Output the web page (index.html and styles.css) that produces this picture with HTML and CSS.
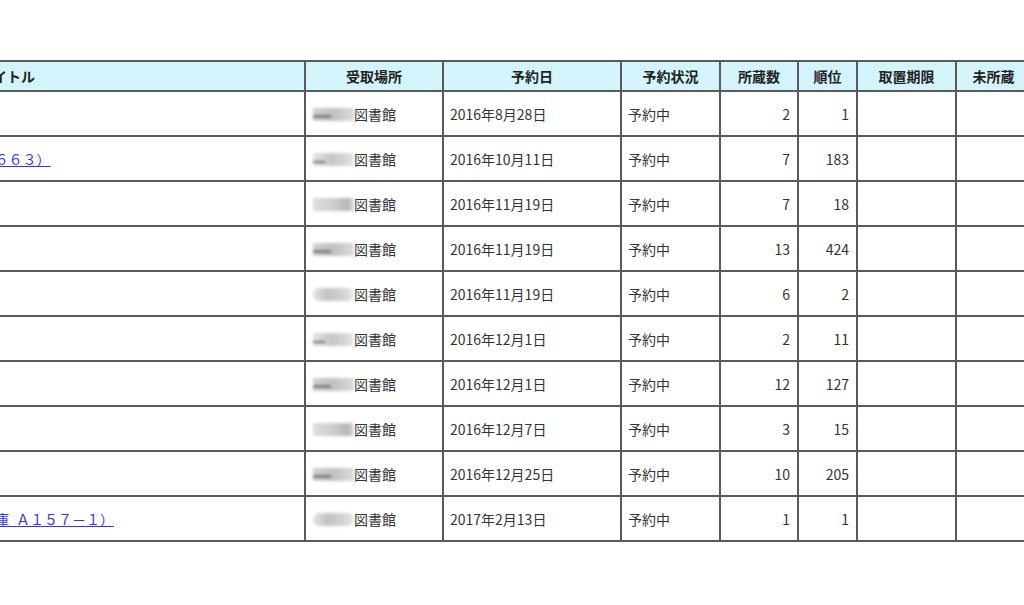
FILE: index.html
```html
<!DOCTYPE html>
<html lang="ja">
<head>
<meta charset="utf-8">
<title>予約一覧</title>
<link rel="stylesheet" href="styles.css">
</head>
<body>
<div class="page">
  <table class="resv">
    <colgroup>
      <col class="c-title">
      <col class="c-place">
      <col class="c-date">
      <col class="c-status">
      <col class="c-count">
      <col class="c-rank">
      <col class="c-keep">
      <col class="c-none">
    </colgroup>
    <thead>
      <tr>
        <th class="th-title">タイトル</th>
        <th>受取場所</th>
        <th>予約日</th>
        <th>予約状況</th>
        <th>所蔵数</th>
        <th>順位</th>
        <th>取置期限</th>
        <th>未所蔵</th>
      </tr>
    </thead>
    <tbody>
      <tr>
        <td class="title"></td>
        <td class="place"><span class="blur b1"></span>図書館</td>
        <td>2016年8月28日</td>
        <td>予約中</td>
        <td class="num">2</td>
        <td class="num">1</td>
        <td></td>
        <td></td>
      </tr>
      <tr>
        <td class="title"><a href="#">新しい図書館のつくりかたとその未来の展望（６６３）</a></td>
        <td class="place"><span class="blur b2"></span>図書館</td>
        <td>2016年10月11日</td>
        <td>予約中</td>
        <td class="num">7</td>
        <td class="num">183</td>
        <td></td>
        <td></td>
      </tr>
      <tr>
        <td class="title"></td>
        <td class="place"><span class="blur b3"></span>図書館</td>
        <td>2016年11月19日</td>
        <td>予約中</td>
        <td class="num">7</td>
        <td class="num">18</td>
        <td></td>
        <td></td>
      </tr>
      <tr>
        <td class="title"></td>
        <td class="place"><span class="blur b1"></span>図書館</td>
        <td>2016年11月19日</td>
        <td>予約中</td>
        <td class="num">13</td>
        <td class="num">424</td>
        <td></td>
        <td></td>
      </tr>
      <tr>
        <td class="title"></td>
        <td class="place"><span class="blur b4"></span>図書館</td>
        <td>2016年11月19日</td>
        <td>予約中</td>
        <td class="num">6</td>
        <td class="num">2</td>
        <td></td>
        <td></td>
      </tr>
      <tr>
        <td class="title"></td>
        <td class="place"><span class="blur b2"></span>図書館</td>
        <td>2016年12月1日</td>
        <td>予約中</td>
        <td class="num">2</td>
        <td class="num">11</td>
        <td></td>
        <td></td>
      </tr>
      <tr>
        <td class="title"></td>
        <td class="place"><span class="blur b1"></span>図書館</td>
        <td>2016年12月1日</td>
        <td>予約中</td>
        <td class="num">12</td>
        <td class="num">127</td>
        <td></td>
        <td></td>
      </tr>
      <tr>
        <td class="title"></td>
        <td class="place"><span class="blur b3"></span>図書館</td>
        <td>2016年12月7日</td>
        <td>予約中</td>
        <td class="num">3</td>
        <td class="num">15</td>
        <td></td>
        <td></td>
      </tr>
      <tr>
        <td class="title"></td>
        <td class="place"><span class="blur b1"></span>図書館</td>
        <td>2016年12月25日</td>
        <td>予約中</td>
        <td class="num">10</td>
        <td class="num">205</td>
        <td></td>
        <td></td>
      </tr>
      <tr>
        <td class="title"><a href="#">世界の名作を読むための小さな手引き（岩波文庫&ensp;Ａ１５７－１）</a></td>
        <td class="place"><span class="blur b4"></span>図書館</td>
        <td>2017年2月13日</td>
        <td>予約中</td>
        <td class="num">1</td>
        <td class="num">1</td>
        <td></td>
        <td></td>
      </tr>
    </tbody>
  </table>
</div>
</body>
</html>
```

FILE: styles.css
```css
html, body {
  margin: 0;
  padding: 0;
  background: #ffffff;
}

body {
  font-family: "Noto Sans CJK JP", "Noto Sans", sans-serif;
  font-size: 14px;
  color: #333333;
  overflow: hidden;
}

.page {
  padding-top: 60px;
  width: 1024px;
  overflow: hidden;
}

.resv {
  margin-left: -302px;
  border-collapse: collapse;
  table-layout: fixed;
  width: 1332px;
}

.c-title  { width: 606px; }
.c-place  { width: 138px; }
.c-date   { width: 178px; }
.c-status { width: 99px; }
.c-count  { width: 78px; }
.c-rank   { width: 59px; }
.c-keep   { width: 99px; }
.c-none   { width: 75px; }

.resv th,
.resv td {
  border: 2px solid #5a5a5a;
  padding: 0 6px;
  white-space: nowrap;
  overflow: hidden;
  vertical-align: middle;
  line-height: 18px;
}

.resv th {
  height: 28px;
  background: #d3f4fb;
  color: #222222;
  font-weight: bold;
  text-align: center;
}

.resv th.th-title {
  padding-left: 16px;
}

.resv td {
  height: 43px;
  text-align: left;
}

.resv td.num {
  text-align: right;
  padding-right: 7px;
}

.resv td.title {
  text-indent: -5px;
}

.title a {
  color: #3333ee;
  text-decoration: underline;
}

.resv td.place {
  padding-left: 7px;
}

.blur {
  display: inline-block;
  width: 41px;
  height: 13px;
  vertical-align: -1px;
  filter: blur(1.6px);
  opacity: 0.85;
}

.b1 {
  background: linear-gradient(to bottom, transparent 55%, #666 55%, #666 75%, transparent 75%) left / 45% 100% no-repeat,
              linear-gradient(to right, #c9c9c9, #b5b5b5 50%, #d6d6d6);
}

.b2 {
  background: linear-gradient(to bottom, transparent 60%, #555 60%, #555 80%, transparent 80%) left / 30% 100% no-repeat,
              linear-gradient(to right, #e2e2e2, #bdbdbd 45%, #cfcfcf 80%, #e6e6e6);
}

.b3 {
  background: linear-gradient(to right, #d8d8d8, #c4c4c4 50%, #a9a9a9 85%, #dcdcdc);
}

.b4 {
  background: linear-gradient(to right, #e0e0e0, #b8b8b8 35%, #c8c8c8 70%, #e4e4e4);
  border-radius: 6px;
}
```
